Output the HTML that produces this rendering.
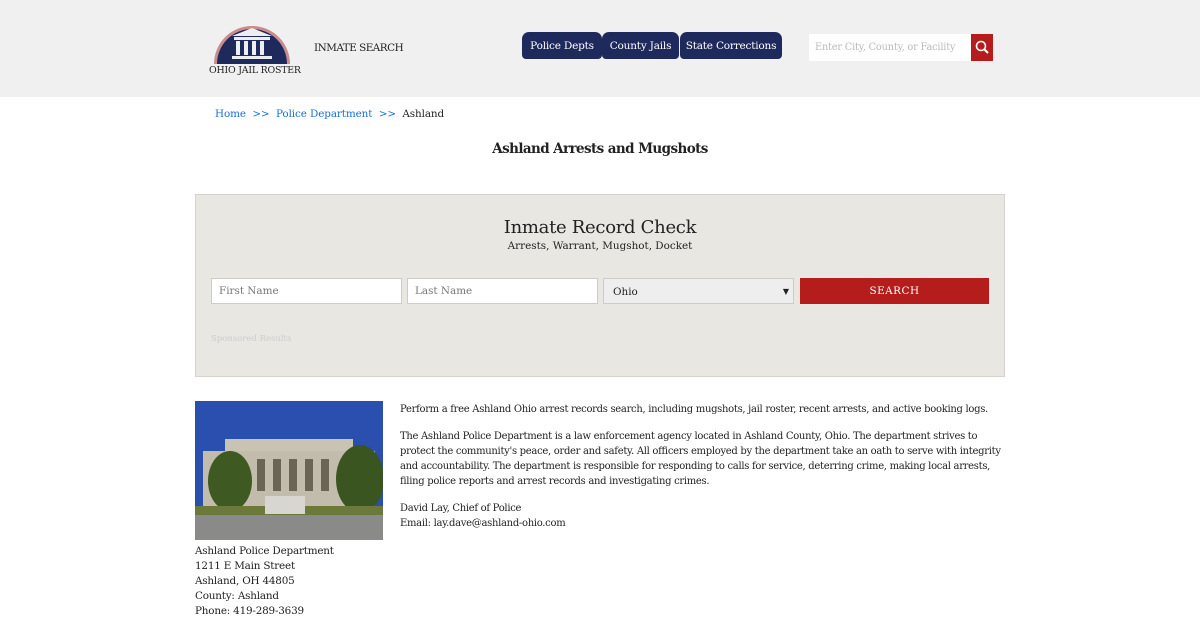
<!DOCTYPE html>
<html><head><style>
body{margin:0;width:1200px;height:620px;overflow:hidden;background:#fff;font-family:"DejaVu Serif","Liberation Serif",serif;color:#222;font-size:10.4px}
.hdr{position:absolute;left:0;top:0;width:1200px;height:97px;background:#f0f0f0}
.abs{position:absolute;white-space:nowrap}
.tab{position:absolute;top:32px;height:27px;background:#1f2a5c;color:#fff;font-size:10.5px;line-height:28px;text-align:center;border-radius:7px 7px 4px 4px;letter-spacing:-.2px}
a{color:#1a6fd6;text-decoration:none}
input{box-sizing:border-box;position:absolute;height:26px;border:1px solid #ccc;background:#fff;font-family:inherit;font-size:10.4px;color:#777;padding:0 7px}
p{margin:0}
</style></head><body>
<div class="hdr">
<svg class="abs" style="left:212px;top:20px" width="80" height="44" viewBox="0 0 80 44">
<path d="M2 44 A38 38 0 0 1 78 44Z" fill="#c98b8e"/>
<path d="M5 44 A35 35 0 0 1 75 44Z" fill="#1f2a5c"/>
<polygon points="20,16 40,8 60,16" fill="#eee"/>
<rect x="22" y="17" width="36" height="3" fill="#eee"/>
<rect x="24" y="21" width="4" height="14" fill="#eee"/><rect x="32" y="21" width="4" height="14" fill="#eee"/><rect x="40" y="21" width="4" height="14" fill="#eee"/><rect x="48" y="21" width="4" height="14" fill="#eee"/>
<rect x="20" y="36" width="40" height="3" fill="#eee"/>
</svg>
<div class="abs" style="left:209px;top:65px;font-size:9.4px;letter-spacing:-.2px">OHIO JAIL ROSTER</div>
<div class="abs" style="left:314px;top:42px;font-size:10.4px;letter-spacing:-.5px">INMATE SEARCH</div>
<div class="tab" style="left:522px;width:80px">Police Depts</div>
<div class="tab" style="left:602px;width:77px">County Jails</div>
<div class="tab" style="left:680px;width:102px">State Corrections</div>
<div class="abs" style="left:809px;top:34px;width:162px;height:27px;background:#fff;font-size:9.8px;color:#bbb;line-height:27px;text-indent:6px;overflow:hidden;letter-spacing:-.2px">Enter City, County, or Facility</div>
<div class="abs" style="left:971px;top:34px;width:22px;height:27px;background:#b51c1c">
<svg width="22" height="27"><circle cx="10" cy="12" r="4.5" stroke="#fff" stroke-width="1.6" fill="none"/><line x1="13" y1="15" x2="17" y2="19" stroke="#fff" stroke-width="2"/></svg></div>
</div>
<div class="abs" style="left:215px;top:108px;letter-spacing:-.1px"><a>Home</a> &nbsp;<a>&gt;&gt;</a>&nbsp; <a>Police Department</a> &nbsp;<a>&gt;&gt;</a>&nbsp; Ashland</div>
<div class="abs" style="left:0;width:1200px;top:141px;text-align:center;font-size:13.5px;font-weight:bold;letter-spacing:-.6px">Ashland Arrests and Mugshots</div>
<div class="abs" style="left:195px;top:194px;width:808px;height:181px;background:#e8e7e1;border:1px solid #d4d3cc">
<div class="abs" style="left:0;width:808px;top:22px;text-align:center;font-size:18px;letter-spacing:-.3px">Inmate Record Check</div>
<div class="abs" style="left:0;width:808px;top:45px;text-align:center;font-size:10.4px">Arrests, Warrant, Mugshot, Docket</div>
<input style="left:15px;top:83px;width:191px" value="First Name">
<input style="left:211px;top:83px;width:191px" value="Last Name">
<div class="abs" style="left:407px;top:83px;width:191px;height:26px;background:#eee;border:1px solid #ccc;box-sizing:border-box;line-height:26px;text-indent:9px">Ohio<span style="position:absolute;right:4px;font-size:8px">&#9660;</span></div>
<div class="abs" style="left:604px;top:83px;width:189px;height:26px;background:#b51c1c;color:#fff;font-size:10.4px;line-height:27px;text-align:center;letter-spacing:.5px">SEARCH</div>
<div class="abs" style="left:15px;top:139px;font-size:8.5px;color:#ccc">Sponsored Results</div>
</div>
<svg class="abs" style="left:195px;top:401px" width="188" height="139" viewBox="0 0 188 139">
<rect width="188" height="139" fill="#2a4fae"/>
<rect x="30" y="38" width="128" height="70" fill="#c9c3b4"/>
<rect x="8" y="50" width="172" height="58" fill="#c2bcad"/>
<g fill="#6a6656"><rect x="62" y="58" width="8" height="32"/><rect x="78" y="58" width="8" height="32"/><rect x="94" y="58" width="8" height="32"/><rect x="110" y="58" width="8" height="32"/><rect x="126" y="58" width="8" height="32"/></g>
<ellipse cx="35" cy="80" rx="22" ry="30" fill="#3e5a22"/>
<ellipse cx="165" cy="78" rx="24" ry="34" fill="#3a5520"/>
<rect x="0" y="105" width="188" height="10" fill="#6b7a3a"/>
<rect x="0" y="114" width="188" height="25" fill="#8a8a88"/>
<rect x="70" y="95" width="40" height="18" fill="#d8d6d0"/>
</svg>
<div class="abs" style="left:195px;top:544px;line-height:15px;letter-spacing:-.2px">Ashland Police Department<br>1211 E Main Street<br>Ashland, OH 44805<br>County: Ashland<br>Phone: 419-289-3639</div>
<div class="abs" style="left:400px;top:402px;width:605px;line-height:15px;white-space:normal;letter-spacing:-.3px;font-size:10px">
<p>Perform a free Ashland Ohio arrest records search, including mugshots, jail roster, recent arrests, and active booking logs.</p>
<p style="margin-top:12px">The Ashland Police Department is a law enforcement agency located in Ashland County, Ohio. The department strives to protect the community's peace, order and safety. All officers employed by the department take an oath to serve with integrity and accountability. The department is responsible for responding to calls for service, deterring crime, making local arrests, filing police reports and arrest records and investigating crimes.</p>
<p style="margin-top:12px">David Lay, Chief of Police<br>Email: lay.dave@ashland-ohio.com</p>
</div>
</body></html>
